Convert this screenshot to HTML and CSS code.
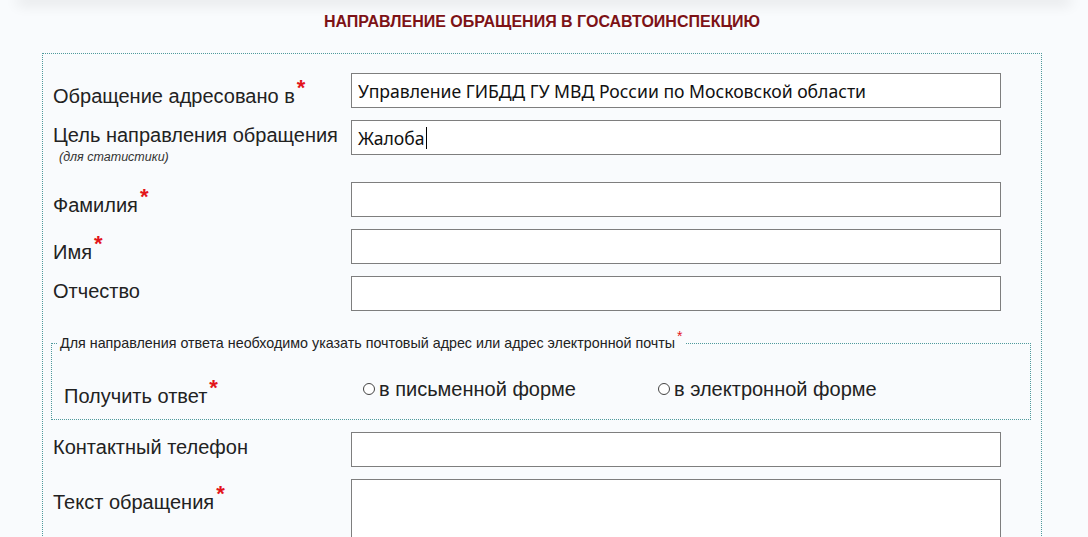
FILE: index.html
```html
<!DOCTYPE html>
<html lang="ru">
<head>
<meta charset="utf-8">
<title>Направление обращения</title>
<link rel="stylesheet" href="styles.css">
</head>
<body>
<div class="topbar"></div>
<div class="page">
  <h1 class="title">НАПРАВЛЕНИЕ ОБРАЩЕНИЯ В ГОСАВТОИНСПЕКЦИЮ</h1>
  <fieldset class="outer">
    <div class="grid">
      <div class="label req">Обращение адресовано в<span class="ast">*</span></div>
      <input class="field" type="text" value="Управление ГИБДД ГУ МВД России по Московской области">

      <div class="label with-note">Цель направления обращения<div class="note">(для статистики)</div></div>
      <div class="field caret-field">Жалоба<span class="caret"></span></div>

      <div class="label req">Фамилия<span class="ast">*</span></div>
      <input class="field" type="text">

      <div class="label req">Имя<span class="ast">*</span></div>
      <input class="field" type="text">

      <div class="label">Отчество</div>
      <input class="field" type="text">

      <fieldset class="inner">
        <legend class="legend">Для направления ответа необходимо указать почтовый адрес или адрес электронной почты<span class="ast-small">*</span></legend>
        <div class="answer-row">
          <div class="label req answer-label">Получить ответ<span class="ast">*</span></div>
          <div class="radios">
            <label class="radio r1"><input type="radio" name="ans"><span>в письменной форме</span></label>
            <label class="radio"><input type="radio" name="ans"><span>в электронной форме</span></label>
          </div>
        </div>
      </fieldset>

      <div class="label">Контактный телефон</div>
      <input class="field" type="text">

      <div class="label req">Текст обращения<span class="ast">*</span></div>
      <textarea class="field area"></textarea>
    </div>
  </fieldset>
</div>
</body>
</html>
```
FILE: styles.css
```css
html, body {
  margin: 0;
  padding: 0;
}
body {
  background: #f9fbfd;
  font-family: "Liberation Sans", Arial, sans-serif;
  color: #222;
  overflow: hidden;
}
.topbar {
  height: 0;
  margin: 0 22px;
  box-shadow: 0 0 14px 5px rgba(0, 0, 0, 0.09);
}
.page {
  width: 1000px;
  margin-left: 42px;
}
.title {
  margin: 0;
  padding-top: 13px;
  text-align: center;
  font-size: 16px;
  line-height: 18px;
  font-weight: bold;
  color: #7d1216;
}
.outer {
  margin: 22px 0 0 0;
  border: 1px dotted #4f9a9c;
  padding: 19px 10px 20px 10px;
  min-width: 0;
}
.grid {
  display: grid;
  grid-template-columns: 298px 650px;
  row-gap: 12px;
  align-items: start;
}
.label {
  font-size: 20px;
  line-height: 22px;
  padding-top: 4px;
  color: #222;
  white-space: nowrap;
}
.label.req {
  padding-top: 12px;
}
.ast {
  color: #e3141b;
  font-weight: bold;
  font-size: 22px;
  line-height: 0;
  vertical-align: 8px;
  margin-left: 2px;
}
.note {
  font-size: 12.5px;
  line-height: 13px;
  font-style: italic;
  color: #333;
  margin-top: 5px;
  margin-left: 6px;
  padding-bottom: 6px;
}
.field {
  box-sizing: border-box;
  height: 35px;
  width: 650px;
  margin: 0;
  border: 1px solid #7e7e7e;
  background: #fff;
  padding: 0 6px;
  font-family: "Noto Sans", "Open Sans", sans-serif;
  font-size: 17.6px;
  color: #111;
  outline: none;
}
.caret-field {
  display: flex;
  align-items: center;
}
.caret {
  display: inline-block;
  width: 1px;
  height: 22px;
  background: #000;
  margin-left: 1px;
}
.area {
  height: 90px;
  resize: none;
}
.inner {
  grid-column: 1 / -1;
  margin: 12px 0 0 -2px;
  width: 980px;
  box-sizing: border-box;
  border: 1px dotted #4f9a9c;
  padding: 22px 6px 12px 6px;
  min-width: 0;
}
.legend {
  padding: 0 2px;
  font-size: 14.3px;
  line-height: 16px;
  color: #222;
}
.ast-small {
  color: #e3141b;
  font-size: 14px;
  line-height: 0;
  vertical-align: 7px;
  margin-left: 2px;
}
.answer-row {
  display: flex;
  align-items: flex-start;
}
.answer-label {
  width: 299px;
  padding-left: 6px;
}
.radios {
  display: flex;
  padding-top: 5px;
}
.radio {
  display: flex;
  align-items: center;
  font-size: 20px;
  line-height: 22px;
  color: #222;
}
.r1 {
  width: 295px;
}
.radio input {
  appearance: none;
  -webkit-appearance: none;
  box-sizing: border-box;
  width: 12px;
  height: 12px;
  margin: 0 4px 0 0;
  border: 1px solid #444;
  border-radius: 50%;
  background: #fff;
}
```
